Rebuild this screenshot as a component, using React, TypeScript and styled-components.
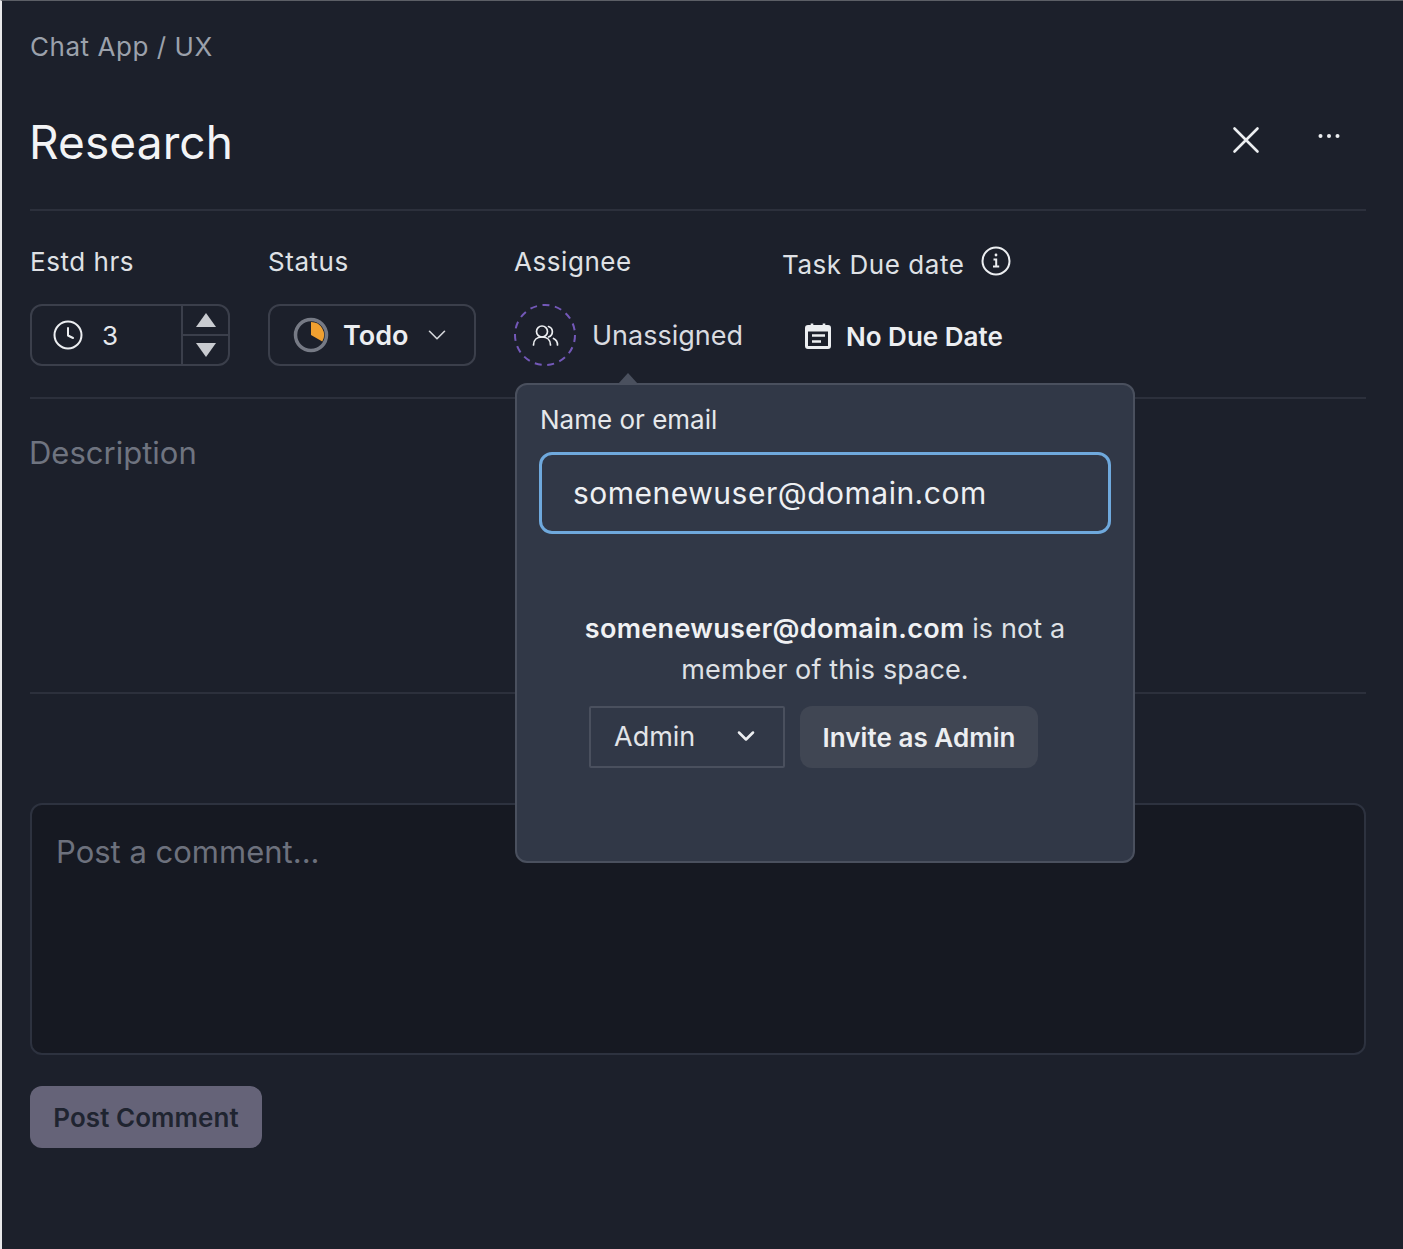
import React from "react";
import styled, { createGlobalStyle } from "styled-components";
import { ChevronDown } from "lucide-react";

const GlobalStyle = createGlobalStyle`
    html, body {
        margin: 0;
        padding: 0;
        background: #1c202b;
    }
    body {
        font-family: "Inter", "Liberation Sans", sans-serif;
    }
`;

const Page = styled.div`
    position: relative;
    box-sizing: border-box;
    width: 1403px;
    height: 1249px;
    padding: 0 37px 0 28px;
    background: #1c202b;
    color: #f0f1f3;
    border-top: 1px solid #5c5f66;
    border-left: 2px solid #e8e8ea;
    overflow: hidden;
`;

const Breadcrumb = styled.div`
    margin-top: 28px;
    height: 36px;
    font-size: 26px;
    line-height: 36px;
    letter-spacing: 0.55px;
    color: #9ba1ab;
`;

const TitleRow = styled.div`
    display: flex;
    align-items: center;
    justify-content: space-between;
    margin-top: 45px;
    height: 64px;
`;

const Title = styled.h1`
    margin: 0 0 0 -1px;
    font-size: 46px;
    line-height: 64px;
    font-weight: 400;
    letter-spacing: 0.1px;
    color: #f3f4f6;
`;

const TitleActions = styled.div`
    display: flex;
    align-items: center;
    gap: 58px;
    margin: -4px 26px 0 0;
`;

const DotsIcon = styled.svg`
    margin-bottom: 8px;
`;

const Divider = styled.div<{ $top: number }>`
    height: 2px;
    margin-top: ${(p) => p.$top}px;
    background: #2c303c;
`;

const Fields = styled.div`
    display: flex;
    margin-top: 33px;
`;

const Field = styled.div<{ $width: number }>`
    width: ${(p) => p.$width}px;
    flex: none;
`;

const Label = styled.div`
    display: flex;
    align-items: center;
    gap: 15px;
    height: 36px;
    font-size: 26px;
    line-height: 36px;
    letter-spacing: 0.55px;
    color: #dfe1e5;
    margin-bottom: 24px;
    white-space: nowrap;
`;

const DueText = styled.span`
    padding-top: 6px;
`;

const InfoIcon = styled.svg`
    margin-bottom: 2px;
    margin-left: 1px;
`;

const Stepper = styled.div`
    display: flex;
    box-sizing: border-box;
    width: 200px;
    height: 62px;
    border: 2px solid #3b3f4b;
    border-radius: 12px;
`;

const StepValue = styled.div`
    display: flex;
    align-items: center;
    flex: 1;
    gap: 18px;
    padding-left: 20px;
    font-size: 26px;
    color: #e5e7eb;
`;

const ClockIcon = styled.svg`
    flex: none;
`;

const StepButtons = styled.div`
    display: flex;
    flex-direction: column;
    width: 45px;
    border-left: 2px solid #3b3f4b;
`;

const StepButton = styled.div<{ $down?: boolean }>`
    display: flex;
    align-items: center;
    justify-content: center;
    flex: 1;
    border-top: ${(p) => (p.$down ? "2px solid #3b3f4b" : "none")};
`;

const StatusSelect = styled.div`
    display: flex;
    align-items: center;
    box-sizing: border-box;
    width: 208px;
    height: 62px;
    padding-left: 23px;
    border: 2px solid #3b3f4b;
    border-radius: 12px;
    font-size: 27px;
    font-weight: 600;
    color: #eceef1;
`;

const StatusText = styled.span`
    margin: 0 14px 0 14px;
`;

const AssigneeRow = styled.div`
    display: flex;
    align-items: center;
    gap: 16px;
    height: 62px;
    font-size: 27px;
    color: #d9dbe0;
    white-space: nowrap;
`;

const AvatarSlot = styled.div`
    display: flex;
    align-items: center;
    justify-content: center;
    width: 62px;
    height: 62px;
    flex: none;
`;

const DueRow = styled.div`
    display: flex;
    align-items: center;
    gap: 14px;
    box-sizing: border-box;
    height: 62px;
    padding: 2px 0 0 22px;
    font-size: 26px;
    font-weight: 600;
    color: #eceef1;
    white-space: nowrap;
`;

const Description = styled.div`
    margin-top: 36px;
    height: 36px;
    font-size: 31px;
    line-height: 36px;
    margin-left: -1px;
    color: #6f7480;
`;

const CommentBox = styled.div`
    box-sizing: border-box;
    height: 252px;
    margin-top: 109px;
    padding: 26px 24px;
    background: #161922;
    border: 2px solid #2d323f;
    border-radius: 12px;
    font-size: 31px;
    line-height: 42px;
    color: #6d717d;
`;

const PostButton = styled.div`
    display: flex;
    align-items: center;
    justify-content: center;
    width: 232px;
    height: 62px;
    margin-top: 31px;
    background: #656378;
    border-radius: 12px;
    font-size: 26px;
    font-weight: 600;
    letter-spacing: 0.05px;
    color: #1f2430;
`;

const Popover = styled.div`
    position: absolute;
    left: 513px;
    top: 382px;
    box-sizing: border-box;
    width: 620px;
    height: 480px;
    padding: 17px 22px;
    background: #313847;
    border: 2px solid #4a505e;
    border-radius: 12px;
`;

const PopArrow = styled.div`
    position: absolute;
    left: 101px;
    top: -12px;
    width: 20px;
    height: 11px;
    background: #4a505e;
    clip-path: polygon(50% 0, 100% 100%, 0 100%);
`;

const PopLabel = styled.div`
    margin-left: 1px;
    font-size: 26px;
    line-height: 36px;
    color: #e6e8eb;
`;

const EmailInput = styled.div`
    box-sizing: border-box;
    display: flex;
    align-items: center;
    height: 82px;
    margin-top: 14px;
    padding-left: 31px;
    border: 3.5px solid #6fa9dd;
    border-radius: 13px;
    font-size: 30px;
    letter-spacing: 0.5px;
    color: #eef0f3;
`;

const InviteMessage = styled.div`
    margin-top: 74px;
    text-align: center;
    font-size: 27px;
    line-height: 41px;
    letter-spacing: 0.1px;
    color: #dfe1e5;

    strong {
        font-weight: 600;
        letter-spacing: 0.3px;
        color: #f0f1f3;
    }
`;

const InviteRow = styled.div`
    display: flex;
    gap: 15px;
    margin-top: 16px;
    padding-left: 50px;
`;

const RoleSelect = styled.div`
    box-sizing: border-box;
    display: flex;
    align-items: center;
    justify-content: space-between;
    width: 196px;
    height: 62px;
    padding: 0 23px 2px 23px;
    border: 2px solid #4a505e;
    border-radius: 2px;
    font-size: 27px;
    color: #e2e4e8;
`;

const InviteButton = styled.div`
    display: flex;
    align-items: center;
    justify-content: center;
    width: 238px;
    height: 62px;
    background: #404653;
    border-radius: 12px;
    font-size: 26px;
    font-weight: 600;
    letter-spacing: 0.05px;
    color: #eceef1;
`;

const App = () => {
    return (
        <Page>
            <GlobalStyle />
            <Breadcrumb>Chat App / UX</Breadcrumb>
            <TitleRow>
                <Title>Research</Title>
                <TitleActions>
                    <svg width="28" height="28" viewBox="0 0 28 28" fill="none" stroke="#eceef1" strokeWidth="2.6" strokeLinecap="round">
                        <path d="M2.5 2.5 L25.5 25.5 M25.5 2.5 L2.5 25.5" />
                    </svg>
                    <DotsIcon width="22" height="6" viewBox="0 0 22 6" fill="#eceef1">
                        <circle cx="2.5" cy="3" r="2" />
                        <circle cx="11" cy="3" r="2" />
                        <circle cx="19.5" cy="3" r="2" />
                    </DotsIcon>
                </TitleActions>
            </TitleRow>
            <Divider $top={35} />
            <Fields>
                <Field $width={238}>
                    <Label>Estd hrs</Label>
                    <Stepper>
                        <StepValue>
                            <ClockIcon width="32" height="32" viewBox="0 0 32 32" fill="none" stroke="#eceef1" strokeWidth="2" strokeLinecap="round" strokeLinejoin="round">
                                <circle cx="16" cy="16" r="13.5" />
                                <path d="M16 9v7.5l5 2.5" />
                            </ClockIcon>
                            3
                        </StepValue>
                        <StepButtons>
                            <StepButton>
                                <svg width="22" height="16" viewBox="0 0 22 16">
                                    <path d="M11 1 L21 15 L1 15 Z" fill="#c9cbd0" />
                                </svg>
                            </StepButton>
                            <StepButton $down>
                                <svg width="22" height="16" viewBox="0 0 22 16">
                                    <path d="M1 1 L21 1 L11 15 Z" fill="#c9cbd0" />
                                </svg>
                            </StepButton>
                        </StepButtons>
                    </Stepper>
                </Field>
                <Field $width={246}>
                    <Label>Status</Label>
                    <StatusSelect>
                        <svg width="36" height="36" viewBox="0 0 36 36">
                            <circle cx="18" cy="18" r="15.5" fill="none" stroke="#767a85" strokeWidth="3.5" />
                            <path d="M18 5 A13 13 0 0 1 29.3 24.5 L18 18 Z" fill="#f0a030" />
                        </svg>
                        <StatusText>Todo</StatusText>
                        <ChevronDown size={30} strokeWidth={1.3} color="#d5d7db" />
                    </StatusSelect>
                </Field>
                <Field $width={268}>
                    <Label>Assignee</Label>
                    <AssigneeRow>
                        <AvatarSlot>
                            <svg width="62" height="62" viewBox="0 0 62 62" fill="none">
                                <circle cx="31" cy="31" r="30" stroke="#7358b8" strokeWidth="2" strokeDasharray="7 5.6" />
                                <g stroke="#eceef1" strokeWidth="1.7" strokeLinecap="round">
                                    <circle cx="28" cy="27.5" r="5.5" />
                                    <path d="M19.5 41c0-5 3.5-8 8.5-8s8.5 3 8.5 8" />
                                    <path d="M34.5 22.5a5.5 5.5 0 0 1 0 10.5" />
                                    <path d="M39.5 34.5c2.6 1.2 4 3.4 4 6.5" />
                                </g>
                            </svg>
                        </AvatarSlot>
                        Unassigned
                    </AssigneeRow>
                </Field>
                <Field $width={300}>
                    <Label>
                        <DueText>Task Due date</DueText>
                        <InfoIcon width="32" height="32" viewBox="0 0 32 32" fill="none" stroke="#eceef1" strokeWidth="2">
                            <circle cx="16" cy="16" r="13.5" />
                            <circle cx="16" cy="10" r="1.4" fill="#eceef1" stroke="none" />
                            <path d="M13.5 14.5h2.7v7M13 21.5h6.2" />
                        </InfoIcon>
                    </Label>
                    <DueRow>
                        <svg width="28" height="28" viewBox="0 0 28 28" fill="none" stroke="#eceef1" strokeWidth="3" strokeLinejoin="round">
                            <rect x="2.5" y="4.5" width="23" height="21" rx="1.5" />
                            <path d="M2.5 7.5h23" strokeWidth="4" />
                            <path d="M8 1.5v4M20 1.5v4" strokeWidth="2.6" />
                            <path d="M8 13.5h13M8 19.5h9" strokeWidth="2.4" />
                        </svg>
                        No Due Date
                    </DueRow>
                </Field>
            </Fields>
            <Divider $top={31} />
            <Description>Description</Description>
            <Divider $top={221} />
            <CommentBox>Post a comment...</CommentBox>
            <PostButton>Post Comment</PostButton>
            <Popover>
                <PopArrow />
                <PopLabel>Name or email</PopLabel>
                <EmailInput>somenewuser@domain.com</EmailInput>
                <InviteMessage>
                    <strong>somenewuser@domain.com</strong> is not a
                    <br />
                    member of this space.
                </InviteMessage>
                <InviteRow>
                    <RoleSelect>
                        Admin
                        <ChevronDown size={28} strokeWidth={2.2} color="#eceef1" />
                    </RoleSelect>
                    <InviteButton>Invite as Admin</InviteButton>
                </InviteRow>
            </Popover>
        </Page>
    );
};

export default App;
